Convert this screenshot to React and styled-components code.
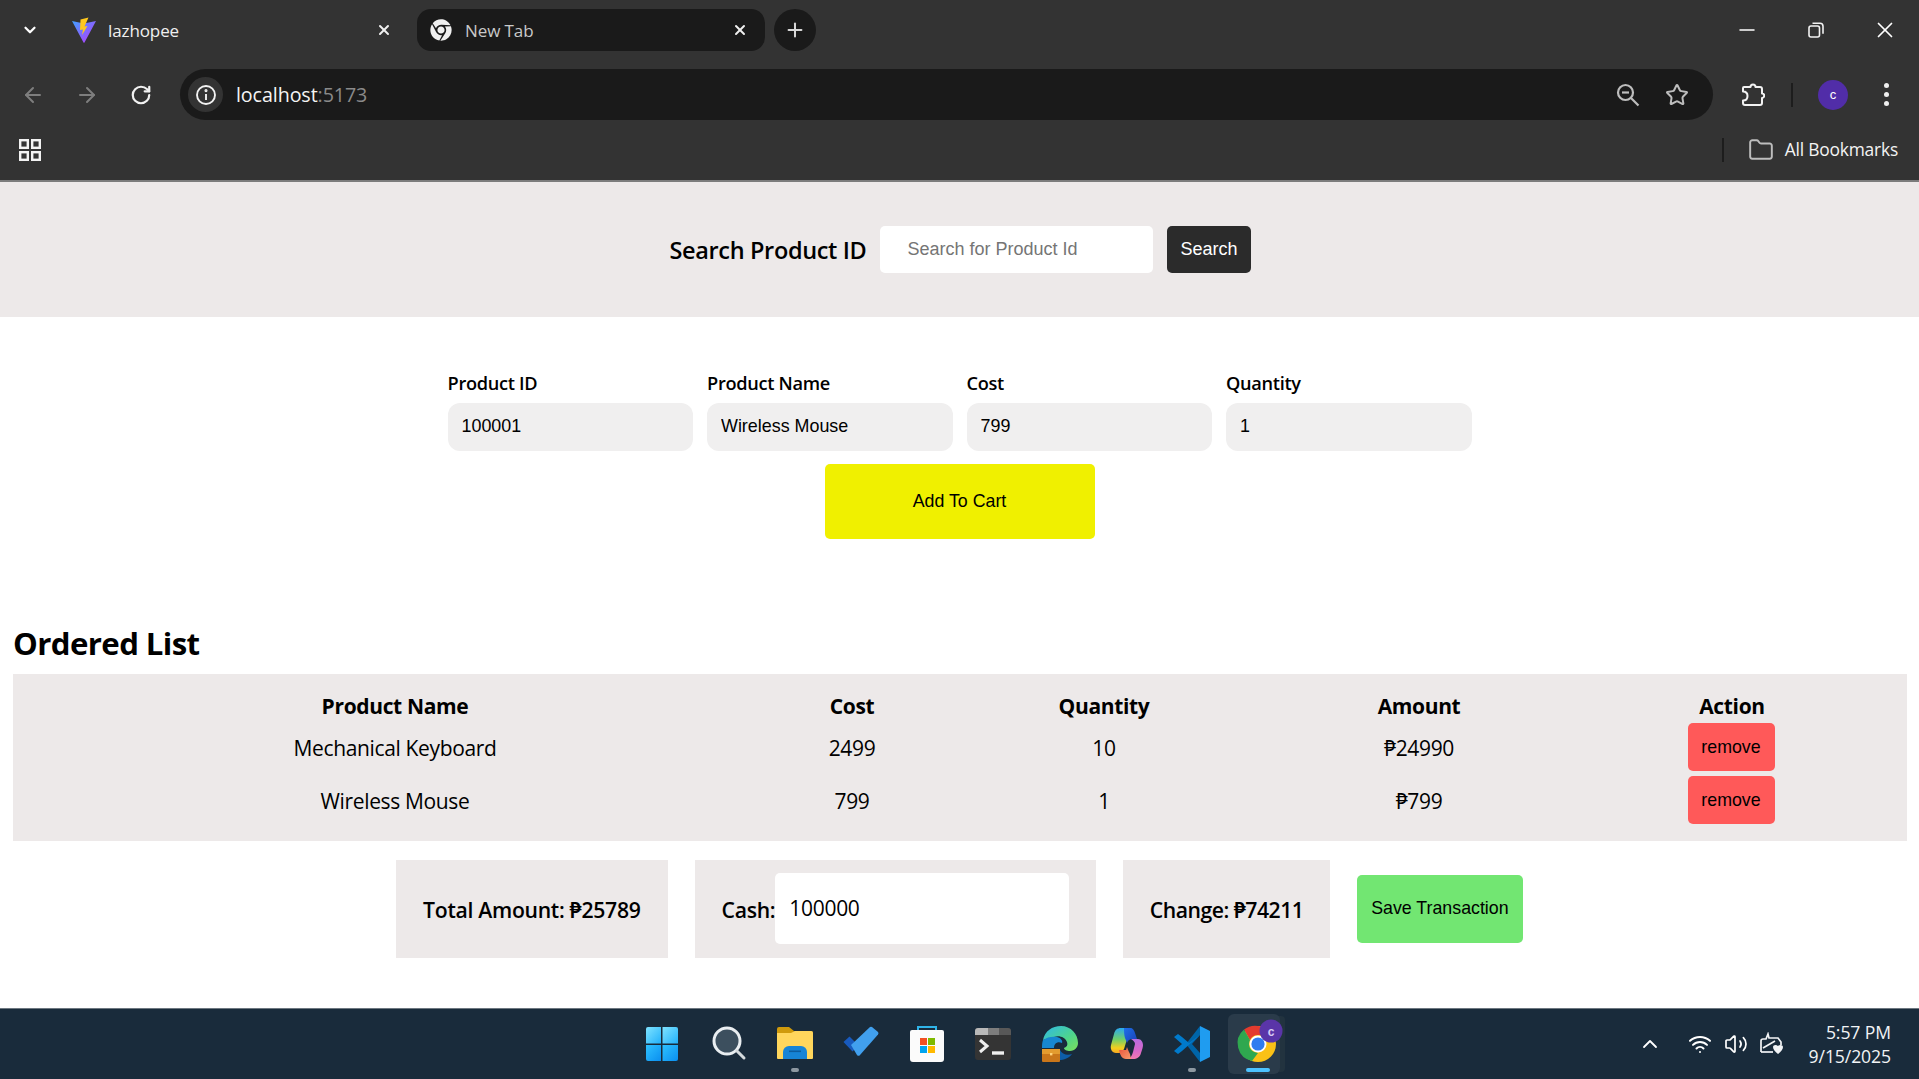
import React from 'react';
import styled, { createGlobalStyle } from 'styled-components';
import { ArrowLeft, ArrowRight, RotateCw, ChevronDown, ChevronUp, Plus, X, Minus, Star, Wifi, Volume2, Folder } from 'lucide-react';
import { FaChrome } from 'react-icons/fa';

const uiFont = '"Open Sans", "Noto Sans", sans-serif';
const formFont = '"Liberation Sans", Arial, sans-serif';

const GlobalStyle = createGlobalStyle`
    html, body, #root {
        margin: 0;
        height: 100%;
        overflow: hidden;
    }
    * {
        box-sizing: border-box;
    }
    body {
        font-family: ${uiFont};
        color: #000;
        background: #fff;
    }
`;

const Screen = styled.div`
    display: flex;
    flex-direction: column;
    height: 100vh;
`;

const BrowserChrome = styled.header`
    flex: none;
    height: 182px;
    background: #333333;
    border-bottom: 2px solid #7c7c7c;
    color: #fff;
`;

const TabStrip = styled.div`
    display: flex;
    align-items: center;
    height: 60px;
`;

const TabMenu = styled.div`
    width: 60px;
    display: flex;
    justify-content: center;
    margin-top: -1px;
`;

const Tab = styled.div`
    display: flex;
    align-items: center;
    height: 42px;
    width: ${(p) => p.$width}px;
    padding-left: ${(p) => p.$pad}px;
    border-radius: 14px;
    background: ${(p) => (p.$dark ? '#1a1a1a' : 'transparent')};
    color: ${(p) => (p.$dark ? '#c9c9c9' : '#f0f0f0')};
    font-size: 17px;
    letter-spacing: -0.1px;
`;

const TabTitle = styled.span`
    flex: 1;
    margin-left: ${(p) => p.$gap}px;
    margin-top: 1px;
    white-space: nowrap;
`;

const TabClose = styled.span`
    display: flex;
    width: 16px;
    margin-right: ${(p) => p.$right}px;
    color: #f0f0f0;
`;

const NewTabButton = styled.div`
    width: 42px;
    height: 42px;
    margin-left: 9px;
    border-radius: 50%;
    background: #1a1a1a;
    color: #d8d8d8;
    display: flex;
    align-items: center;
    justify-content: center;
`;

const WindowControls = styled.div`
    margin-left: auto;
    display: flex;
`;

const WindowButton = styled.div`
    width: 69px;
    height: 58px;
    display: flex;
    align-items: center;
    justify-content: center;
`;

const Toolbar = styled.div`
    display: flex;
    align-items: center;
    height: 69px;
    padding-left: 6px;
`;

const NavButton = styled.div`
    width: 54px;
    display: flex;
    justify-content: center;
    color: ${(p) => (p.$off ? '#7e7e7e' : '#f2f2f2')};
`;

const AddressBar = styled.div`
    flex: 1;
    height: 51px;
    margin-left: 12px;
    padding: 0 24px 0 8px;
    border-radius: 26px;
    background: #1a1a1a;
    display: flex;
    align-items: center;
`;

const InfoBadge = styled.div`
    width: 35px;
    height: 35px;
    border-radius: 50%;
    background: #333333;
    display: flex;
    align-items: center;
    justify-content: center;
`;

const Url = styled.div`
    margin-left: 13px;
    font-size: 19.7px;
    color: #f4f4f4;
    letter-spacing: -0.1px;
`;

const UrlPort = styled.span`
    color: #8a8a8a;
`;

const AddressIcons = styled.div`
    margin-left: auto;
    display: flex;
    gap: 25px;
    color: #bdbdbd;
`;

const ToolIcons = styled.div`
    width: 206px;
    display: flex;
    align-items: center;
`;

const ExtensionSlot = styled.div`
    width: 78px;
    display: flex;
    justify-content: flex-end;
    padding-right: 26px;
`;

const ToolDivider = styled.div`
    width: 2px;
    height: 24px;
    background: #1d1d1d;
`;

const Avatar = styled.div`
    width: 30px;
    height: 30px;
    margin-left: 25px;
    border-radius: 50%;
    background: #512da8;
    display: flex;
    align-items: center;
    justify-content: center;
    font-size: 13px;
    font-family: ${formFont};
`;

const DotsIcon = styled.div`
    display: flex;
    flex-direction: column;
    gap: 4px;
    margin-left: 36px;
`;

const Dot = styled.span`
    width: 5px;
    height: 5px;
    border-radius: 50%;
    background: #f0f0f0;
`;

const BookmarkBar = styled.div`
    display: flex;
    align-items: center;
    height: 41px;
    padding: 0 21px 0 19px;
`;

const BookmarkDivider = styled.div`
    margin-left: auto;
    width: 2px;
    height: 24px;
    background: #1d1d1d;
`;

const BookmarkFolder = styled.div`
    margin-left: 24px;
    margin-right: 11px;
    display: flex;
    color: #bdbdbd;
`;

const BookmarkText = styled.span`
    font-size: 17.4px;
    color: #f4f4f4;
    letter-spacing: -0.2px;
    margin-top: -2px;
`;

const Page = styled.main`
    flex: 1;
    min-height: 0;
    background: #fff;
`;

const SearchBand = styled.section`
    height: 135px;
    padding: 44px 0 0 2px;
    background: #ede9e9;
    display: flex;
    justify-content: center;
    align-items: flex-start;
    gap: 14px;
`;

const SearchLabel = styled.label`
    font-size: 23.5px;
    font-weight: 600;
    letter-spacing: -0.35px;
    line-height: 48px;
`;

const SearchInput = styled.input`
    width: 273px;
    height: 47px;
    padding: 0 27px;
    border: 0;
    border-radius: 5px;
    background: #fff;
    font-family: ${formFont};
    font-size: 18px;
    &::placeholder {
        color: #757575;
        opacity: 1;
    }
`;

const SearchButton = styled.button`
    width: 84px;
    height: 47px;
    border: 0;
    border-radius: 5px;
    background: #2b2b2b;
    color: #fff;
    font-family: ${formFont};
    font-size: 18px;
    padding: 0 1px 0 0;
`;

const ProductForm = styled.section`
    display: flex;
    flex-direction: column;
    align-items: center;
    padding-top: 54px;
`;

const FieldRow = styled.div`
    display: flex;
    gap: 14px;
`;

const Field = styled.div`
    width: 245.5px;
    display: flex;
    flex-direction: column;
`;

const FieldLabel = styled.label`
    font-size: 18.2px;
    font-weight: 600;
    letter-spacing: -0.3px;
    line-height: 24px;
    margin-bottom: 8px;
`;

const FieldInput = styled.input`
    height: 48px;
    padding: 0 13px 2px 14px;
    border: 0;
    border-radius: 12px;
    background: #f0efef;
    font-family: ${formFont};
    font-size: 17.9px;
    color: #000;
`;

const AddButton = styled.button`
    width: 270px;
    height: 75px;
    margin-top: 13px;
    border: 0;
    border-radius: 5px;
    background: #f0f000;
    font-family: ${formFont};
    font-size: 17.8px;
    color: #000;
`;

const OrderSection = styled.section`
    padding: 0 12px 0 13px;
`;

const OrderTitle = styled.h2`
    margin: 84px 0 0;
    height: 51px;
    font-size: 31.2px;
    font-weight: 700;
    letter-spacing: -0.6px;
    line-height: 40px;
`;

const OrderTable = styled.div`
    padding: 20px 0 14px;
    background: #ede9e9;
`;

const OrderRow = styled.div`
    display: grid;
    grid-template-columns: 764px 150px 354px 276px 350px;
    align-items: center;
    justify-items: center;
    height: ${(p) => (p.$head ? 27 : 53)}px;
    padding-bottom: ${(p) => (p.$head ? 3 : 0)}px;
    line-height: ${(p) => (p.$head ? '24px' : 'normal')};
    font-size: 21px;
    font-weight: ${(p) => (p.$head ? 700 : 400)};
    letter-spacing: -0.35px;
`;

const RemoveButton = styled.button`
    width: 87px;
    height: 48px;
    margin: -2px 2px 0 0;
    padding: 1px 0 0;
    border: 0;
    border-radius: 5px;
    background: #ff5959;
    font-family: ${formFont};
    font-size: 17.8px;
    color: #000;
`;

const SummaryRow = styled.section`
    display: flex;
    justify-content: center;
    align-items: center;
    gap: 27px;
    margin-top: 19px;
`;

const SummaryBox = styled.div`
    height: 98px;
    padding: 1px ${(p) => p.$pad || 27}px 0;
    background: #ede9e9;
    display: flex;
    align-items: center;
    font-size: 21.2px;
    font-weight: 600;
    letter-spacing: ${(p) => p.$spacing || -0.3}px;
    white-space: nowrap;
`;

const CashInput = styled.input`
    width: 294px;
    height: 71px;
    margin-top: -2px;
    padding: 0 14px 2px;
    border: 0;
    border-radius: 5px;
    background: #fff;
    font-family: ${uiFont};
    font-size: 21px;
    letter-spacing: -0.3px;
    color: #000;
`;

const SaveButton = styled.button`
    width: 166px;
    height: 68px;
    border: 0;
    border-radius: 5px;
    background: #72e672;
    font-family: ${formFont};
    font-size: 17.8px;
    color: #000;
    padding: 0 0 2px;
`;

const Taskbar = styled.footer`
    flex: none;
    height: 71px;
    background: #192b3b;
    border-top: 1px solid #6d7780;
    display: flex;
    position: relative;
    color: #fff;
`;

const TaskIcons = styled.div`
    position: absolute;
    left: 645px;
    top: 17px;
    display: flex;
    gap: 30.1px;
`;

const TaskIcon = styled.div`
    width: 36px;
    height: 36px;
    position: relative;
    display: flex;
`;

const TaskHighlight = styled.div`
    position: absolute;
    left: -12px;
    top: -12px;
    width: 52px;
    height: 60px;
    border-radius: 6px;
    background: #2a3b4a;
    box-shadow: 7px 0 0 -2px #22333f;
    z-index: 0;
`;

const TaskDot = styled.span`
    position: absolute;
    left: ${(p) => (p.$active ? 6 : 14)}px;
    top: 42px;
    width: ${(p) => (p.$active ? 24 : 8)}px;
    height: 4px;
    border-radius: 2px;
    background: ${(p) => (p.$active ? '#4cc2ff' : '#8d98a1')};
    z-index: 1;
`;

const TaskGlyph = styled.svg`
    position: relative;
    z-index: 1;
    overflow: visible;
`;

const Tray = styled.div`
    margin-left: auto;
    display: flex;
    align-items: center;
    padding-right: 28px;
`;

const TrayIcon = styled.div`
    display: flex;
    margin-right: ${(p) => p.$gap}px;
`;

const Clock = styled.div`
    margin-left: 24px;
    text-align: right;
    font-size: 17.6px;
    line-height: 24px;
    letter-spacing: -0.1px;
    color: #f2f4f6;
`;

const ViteLogo = () => (
    <svg width="26" height="26" viewBox="0 0 26 26">
        <defs>
            <linearGradient id="viteBody" x1="0" y1="0" x2="1" y2="1">
                <stop offset="0" stopColor="#41a1ff" />
                <stop offset="1" stopColor="#bd34fe" />
            </linearGradient>
        </defs>
        <path d="M1 4 L13 6.5 L25 4 L13.5 25.5 Q13 26 12.5 25.5 Z" fill="url(#viteBody)" />
        <path d="M17.5 0.5 L9.5 2.5 L9 13 L12 12.5 L11 18 L16.5 9 L13.5 9.5 Z" fill="#ffc81e" />
    </svg>
);

const AppsGrid = () => (
    <svg width="22" height="22" viewBox="0 0 22 22" fill="none" stroke="#f2f2f2" strokeWidth="2.4">
        <rect x="1.2" y="1.2" width="7.6" height="7.6" />
        <rect x="13.2" y="1.2" width="7.6" height="7.6" />
        <rect x="1.2" y="13.2" width="7.6" height="7.6" />
        <rect x="13.2" y="13.2" width="7.6" height="7.6" />
    </svg>
);

const InfoIcon = () => (
    <svg width="22" height="22" viewBox="0 0 22 22" fill="none" stroke="#f2f2f2" strokeWidth="1.9">
        <circle cx="11" cy="11" r="9" />
        <path d="M11 10v6" />
        <circle cx="11" cy="6.6" r="0.6" fill="#f2f2f2" />
    </svg>
);

const RestoreIcon = () => (
    <svg width="16" height="16" viewBox="0 0 16 16" fill="none" stroke="#f2f2f2" strokeWidth="1.6">
        <rect x="1" y="4" width="10.5" height="11" rx="2" />
        <path d="M4.5 1.2h7.5a3 3 0 0 1 3 3v7.5" />
    </svg>
);

const ZoomOutIcon = () => (
    <svg width="24" height="24" viewBox="0 0 24 24" fill="none" stroke="#bdbdbd" strokeWidth="2.2">
        <circle cx="9.5" cy="9.5" r="7.5" />
        <path d="M6 9.5h7" />
        <path d="M15 15l7.5 7.5" />
    </svg>
);

const ExtensionIcon = () => (
    <svg width="24" height="26" viewBox="0 0 24 26" fill="none" stroke="#f2f2f2" strokeWidth="2" strokeLinejoin="round">
        <path d="M3 5h6.5a2.5 2.5 0 0 1 5 0H19a2 2 0 0 1 2 2v4.5a2.2 2.2 0 0 1 0 4.4V21a2 2 0 0 1-2 2H4a2 2 0 0 1-2-2v-2.5c3 0 4.5-2 4.5-4.5S5 9.5 2 9.5V6a1 1 0 0 1 1-1z" />
    </svg>
);

const WindowsIcon = () => (
    <TaskGlyph width="36" height="36" viewBox="0 0 36 36">
        <defs>
            <linearGradient id="winTop" x1="0" y1="0" x2="1" y2="1">
                <stop offset="0" stopColor="#7fe3ff" />
                <stop offset="1" stopColor="#22b1fb" />
            </linearGradient>
            <linearGradient id="winBottom" x1="0" y1="0" x2="1" y2="1">
                <stop offset="0" stopColor="#2ec1ff" />
                <stop offset="1" stopColor="#0a8ff0" />
            </linearGradient>
        </defs>
        <path d="M1 3a2 2 0 0 1 2-2h13v16.5H1z" fill="url(#winTop)" />
        <path d="M17.5 1H31a2 2 0 0 1 2 2v14.5H17.5z" fill="url(#winTop)" />
        <path d="M1 19h15v16H3a2 2 0 0 1-2-2z" fill="url(#winBottom)" />
        <path d="M17.5 19H33v14a2 2 0 0 1-2 2H17.5z" fill="url(#winBottom)" />
    </TaskGlyph>
);

const SearchTaskIcon = () => (
    <TaskGlyph width="36" height="36" viewBox="0 0 36 36" fill="none">
        <circle cx="16" cy="15" r="13" fill="#3c4f5e" stroke="#e9eef1" strokeWidth="3" />
        <path d="M26 25l7 7" stroke="#d5dadd" strokeWidth="3" strokeLinecap="round" />
    </TaskGlyph>
);

const FolderTaskIcon = () => (
    <TaskGlyph width="36" height="36" viewBox="0 0 36 36">
        <path d="M0 3a2 2 0 0 1 2-2h10l5 4h17a2 2 0 0 1 2 2v6H0z" fill="#cf9a0c" />
        <path d="M0 7h14l4-2h16a2 2 0 0 1 2 2v25a1 1 0 0 1-1 1H1a1 1 0 0 1-1-1z" fill="#ffd65c" />
        <path d="M6 33V26a6 6 0 0 1 6-6h12a6 6 0 0 1 6 6v7z" fill="#1684d6" />
        <rect x="12" y="24.5" width="12" height="1.6" fill="#0c5c9e" />
    </TaskGlyph>
);

const TodoTaskIcon = () => (
    <TaskGlyph width="36" height="36" viewBox="0 0 36 36">
        <path d="M0.5 16l6-5.5 9 9-6 6z" fill="#185abd" />
        <path d="M8 19L27 1a2 2 0 0 1 2 0l6 5a2 2 0 0 1 0 2.5L17 29a2 2 0 0 1-3 0z" fill="#41a0ee" />
    </TaskGlyph>
);

const StoreTaskIcon = () => (
    <TaskGlyph width="36" height="36" viewBox="0 0 36 36" fill="none">
        <path d="M9 6V1h18v5" stroke="#2fb4e8" strokeWidth="2" />
        <path d="M1 6a2 2 0 0 1 2-2h30a2 2 0 0 1 2 2v27a3 3 0 0 1-3 3H4a3 3 0 0 1-3-3z" fill="#fbfbfb" />
        <rect x="11" y="12" width="7" height="7" fill="#f25022" />
        <rect x="19" y="12" width="7" height="7" fill="#7fba00" />
        <rect x="11" y="20" width="7" height="7" fill="#00a4ef" />
        <rect x="19" y="20" width="7" height="7" fill="#ffb900" />
    </TaskGlyph>
);

const TerminalTaskIcon = () => (
    <TaskGlyph width="36" height="36" viewBox="0 0 36 36" fill="none">
        <rect x="0" y="2" width="36" height="32" rx="3" fill="#343434" />
        <path d="M0 5a3 3 0 0 1 3-3h10v7H0z" fill="#b8b8b8" />
        <path d="M13 2h11v7H13z" fill="#7d7d7d" />
        <path d="M24 2h9a3 3 0 0 1 3 3v4H24z" fill="#585858" />
        <path d="M5 14l7 6-7 6" stroke="#efefef" strokeWidth="3" />
        <path d="M17 27h12" stroke="#efefef" strokeWidth="3.4" />
    </TaskGlyph>
);

const EdgeTaskIcon = () => (
    <TaskGlyph width="36" height="36" viewBox="0 0 36 36">
        <defs>
            <linearGradient id="edgeArc" x1="0" y1="0" x2="1" y2="1">
                <stop offset="0" stopColor="#2fb9e6" />
                <stop offset="0.6" stopColor="#4fd58a" />
                <stop offset="1" stopColor="#7ee05a" />
            </linearGradient>
        </defs>
        <path d="M1 14C3 5 10 0 19 0c10 0 17 8 17 17 0 4-3 8-8 8-3 0-6-1-6-3 3-1 4-3 3-6-2-5-8-7-13-5-5 1-8 2-11 3z" fill="url(#edgeArc)" />
        <path d="M1 14c4-3 10-4 14-3 4 1 6 4 5 6-4-2-8 0-8 5H0c0-3 0-5 1-8z" fill="#1787d0" />
        <path d="M18 24c2 4 7 6 12 4-3 4-8 6-13 6H0v-4h16c1-2 1-4 2-6z" fill="#0d5da8" />
        <rect x="0" y="23" width="18" height="13" rx="1" fill="#c9761a" />
        <rect x="0" y="23" width="18" height="5" fill="#e39b2f" />
        <rect x="8" y="27" width="2.4" height="2.4" fill="#ffd27a" />
    </TaskGlyph>
);

const CopilotTaskIcon = () => (
    <TaskGlyph width="36" height="36" viewBox="0 0 36 36">
        <defs>
            <linearGradient id="copLeft" x1="0" y1="0" x2="0" y2="1">
                <stop offset="0" stopColor="#2aa8f0" />
                <stop offset="0.45" stopColor="#6fcf6a" />
                <stop offset="0.8" stopColor="#f5cf1e" />
                <stop offset="1" stopColor="#f5a623" />
            </linearGradient>
            <linearGradient id="copRight" x1="0" y1="0" x2="0" y2="1">
                <stop offset="0" stopColor="#b96ce0" />
                <stop offset="0.6" stopColor="#d868c8" />
                <stop offset="1" stopColor="#f07ab0" />
            </linearGradient>
            <linearGradient id="copBottom" x1="0" y1="0" x2="1" y2="1">
                <stop offset="0" stopColor="#e8503a" />
                <stop offset="1" stopColor="#f89c6c" />
            </linearGradient>
            <linearGradient id="copTop" x1="0" y1="0" x2="1" y2="1">
                <stop offset="0" stopColor="#1e6fe8" />
                <stop offset="1" stopColor="#1b3fb8" />
            </linearGradient>
        </defs>
        <path d="M20 2h-7c-4 0-6 2-7 6L3 19c-1 4 1 8 5 8h3c2 0 4-2 5-4l4-13c1-3 2-6 4-7z" fill="url(#copLeft)" />
        <path d="M16 2h6c3 0 4 2 5 5l2 6h-5c-2 0-4 1-5 4l-2-5c-1-3-1-7-1-10z" fill="url(#copTop)" />
        <path d="M23 13h7c3 0 5 3 5 6 0 2-1 5-2 8-1 4-4 6-8 6h-5c3-1 4-4 5-7l2-8c0-2-2-4-4-5z" fill="url(#copRight)" />
        <path d="M11 24h7l1-3c1 3 2 5 3 7l1 5h-5c-4 0-6-4-7-9z" fill="url(#copBottom)" />
    </TaskGlyph>
);

const VscodeTaskIcon = () => (
    <TaskGlyph width="36" height="36" viewBox="0 0 36 36">
        <path d="M26 0l10 5v26l-10 5z" fill="#1f9cf0" />
        <path d="M26 0L12 18l14 18v-9l-8-9 8-9z" fill="#0065a9" />
        <path d="M26 9L8 25l-4 3-4-3 8-7-8-7 4-3 4 3 7 6z" fill="#007acc" />
    </TaskGlyph>
);

const ChromeTaskIcon = () => (
    <TaskGlyph width="36" height="36" viewBox="0 0 36 36">
        <circle cx="18" cy="18" r="18" fill="#fbc116" />
        <path d="M18 0a18 18 0 0 1 15.6 9H18a9 9 0 0 0-8 5L4 3.6A18 18 0 0 1 18 0z" fill="#e33b2e" />
        <path d="M4 3.6L10 14a9 9 0 0 0 8 13L12 35A18 18 0 0 1 4 3.6z" fill="#2fa84f" />
        <circle cx="18" cy="18" r="8.5" fill="#fff" />
        <circle cx="18" cy="18" r="6.6" fill="#2f7cf0" />
        <circle cx="31" cy="5" r="11.5" fill="#5a35a8" />
        <text x="31" y="9.5" textAnchor="middle" fontSize="12" fontFamily={formFont} fontWeight="700" fill="#d9cdf5">c</text>
    </TaskGlyph>
);

const UpdateTrayIcon = () => (
    <svg width="26" height="24" viewBox="0 0 26 24" fill="none" stroke="#f2f4f6" strokeWidth="1.7">
        <path d="M2 20V9a2 2 0 0 1 2-2h3l2-5 1 4h9l3 4v3" />
        <path d="M2 20h12" />
        <path d="M4 16l12-7" />
        <path d="M19 14c2-2 5-1 5 1 0 2-2 5-5 7-3-2-5-5-5-7 0-2 3-3 5-1z" fill="#f2f4f6" stroke="none" />
    </svg>
);

const fields = [
    { label: 'Product ID', value: '100001' },
    { label: 'Product Name', value: 'Wireless Mouse' },
    { label: 'Cost', value: '799' },
    { label: 'Quantity', value: '1' },
];

const orders = [
    { name: 'Mechanical Keyboard', cost: 2499, quantity: 10, amount: 24990 },
    { name: 'Wireless Mouse', cost: 799, quantity: 1, amount: 799 },
];

const taskApps = [
    { id: 'windows', Icon: WindowsIcon },
    { id: 'search', Icon: SearchTaskIcon },
    { id: 'files', Icon: FolderTaskIcon, open: true },
    { id: 'todo', Icon: TodoTaskIcon },
    { id: 'store', Icon: StoreTaskIcon },
    { id: 'terminal', Icon: TerminalTaskIcon },
    { id: 'edge', Icon: EdgeTaskIcon },
    { id: 'copilot', Icon: CopilotTaskIcon },
    { id: 'vscode', Icon: VscodeTaskIcon, open: true },
    { id: 'chrome', Icon: ChromeTaskIcon, active: true },
];

const App = () => {
    return (
        <Screen>
            <GlobalStyle />
            <BrowserChrome>
                <TabStrip>
                    <TabMenu>
                        <ChevronDown size={18} strokeWidth={3} />
                    </TabMenu>
                    <Tab $width={357} $pad={11}>
                        <ViteLogo />
                        <TabTitle $gap={11}>lazhopee</TabTitle>
                        <TabClose $right={25}>
                            <X size={16} strokeWidth={3} />
                        </TabClose>
                    </Tab>
                    <Tab $width={348} $pad={13} $dark>
                        <FaChrome size={22} color="#f0f0f0" />
                        <TabTitle $gap={13}>New Tab</TabTitle>
                        <TabClose $right={17}>
                            <X size={16} strokeWidth={3} />
                        </TabClose>
                    </Tab>
                    <NewTabButton>
                        <Plus size={22} strokeWidth={2.2} />
                    </NewTabButton>
                    <WindowControls>
                        <WindowButton>
                            <Minus size={24} strokeWidth={1.5} />
                        </WindowButton>
                        <WindowButton>
                            <RestoreIcon />
                        </WindowButton>
                        <WindowButton>
                            <X size={26} strokeWidth={1.6} />
                        </WindowButton>
                    </WindowControls>
                </TabStrip>
                <Toolbar>
                    <NavButton $off>
                        <ArrowLeft size={24} strokeWidth={2} />
                    </NavButton>
                    <NavButton $off>
                        <ArrowRight size={24} strokeWidth={2} />
                    </NavButton>
                    <NavButton>
                        <RotateCw size={22} strokeWidth={2.4} />
                    </NavButton>
                    <AddressBar>
                        <InfoBadge>
                            <InfoIcon />
                        </InfoBadge>
                        <Url>
                            localhost<UrlPort>:5173</UrlPort>
                        </Url>
                        <AddressIcons>
                            <ZoomOutIcon />
                            <Star size={24} strokeWidth={2} />
                        </AddressIcons>
                    </AddressBar>
                    <ToolIcons>
                        <ExtensionSlot>
                            <ExtensionIcon />
                        </ExtensionSlot>
                        <ToolDivider />
                        <Avatar>c</Avatar>
                        <DotsIcon>
                            <Dot />
                            <Dot />
                            <Dot />
                        </DotsIcon>
                    </ToolIcons>
                </Toolbar>
                <BookmarkBar>
                    <AppsGrid />
                    <BookmarkDivider />
                    <BookmarkFolder>
                        <Folder size={26} strokeWidth={1.8} />
                    </BookmarkFolder>
                    <BookmarkText>All Bookmarks</BookmarkText>
                </BookmarkBar>
            </BrowserChrome>

            <Page>
                <SearchBand>
                    <SearchLabel>Search Product ID</SearchLabel>
                    <SearchInput placeholder="Search for Product Id" />
                    <SearchButton>Search</SearchButton>
                </SearchBand>

                <ProductForm>
                    <FieldRow>
                        {fields.map((field) => (
                            <Field key={field.label}>
                                <FieldLabel>{field.label}</FieldLabel>
                                <FieldInput defaultValue={field.value} />
                            </Field>
                        ))}
                    </FieldRow>
                    <AddButton>Add To Cart</AddButton>
                </ProductForm>

                <OrderSection>
                    <OrderTitle>Ordered List</OrderTitle>
                    <OrderTable>
                        <OrderRow $head>
                            <span>Product Name</span>
                            <span>Cost</span>
                            <span>Quantity</span>
                            <span>Amount</span>
                            <span>Action</span>
                        </OrderRow>
                        {orders.map((order) => (
                            <OrderRow key={order.name}>
                                <span>{order.name}</span>
                                <span>{order.cost}</span>
                                <span>{order.quantity}</span>
                                <span>₱{order.amount}</span>
                                <RemoveButton>remove</RemoveButton>
                            </OrderRow>
                        ))}
                    </OrderTable>
                </OrderSection>

                <SummaryRow>
                    <SummaryBox>Total Amount: ₱25789</SummaryBox>
                    <SummaryBox>
                        Cash:
                        <CashInput defaultValue="100000" />
                    </SummaryBox>
                    <SummaryBox $pad={26.5} $spacing={-0.5}>Change: ₱74211</SummaryBox>
                    <SaveButton>Save Transaction</SaveButton>
                </SummaryRow>
            </Page>

            <Taskbar>
                <TaskIcons>
                    {taskApps.map(({ id, Icon, open, active }) => (
                        <TaskIcon key={id}>
                            {active && <TaskHighlight />}
                            <Icon />
                            {(open || active) && <TaskDot $active={active} />}
                        </TaskIcon>
                    ))}
                </TaskIcons>
                <Tray>
                    <TrayIcon $gap={26}>
                        <ChevronUp size={24} strokeWidth={1.8} />
                    </TrayIcon>
                    <TrayIcon $gap={12}>
                        <Wifi size={24} strokeWidth={2} />
                    </TrayIcon>
                    <TrayIcon $gap={11}>
                        <Volume2 size={24} strokeWidth={1.7} />
                    </TrayIcon>
                    <TrayIcon $gap={0}>
                        <UpdateTrayIcon />
                    </TrayIcon>
                    <Clock>
                        5:57 PM
                        <br />
                        9/15/2025
                    </Clock>
                </Tray>
            </Taskbar>
        </Screen>
    );
};

App.displayName = 'App';
export default App;
